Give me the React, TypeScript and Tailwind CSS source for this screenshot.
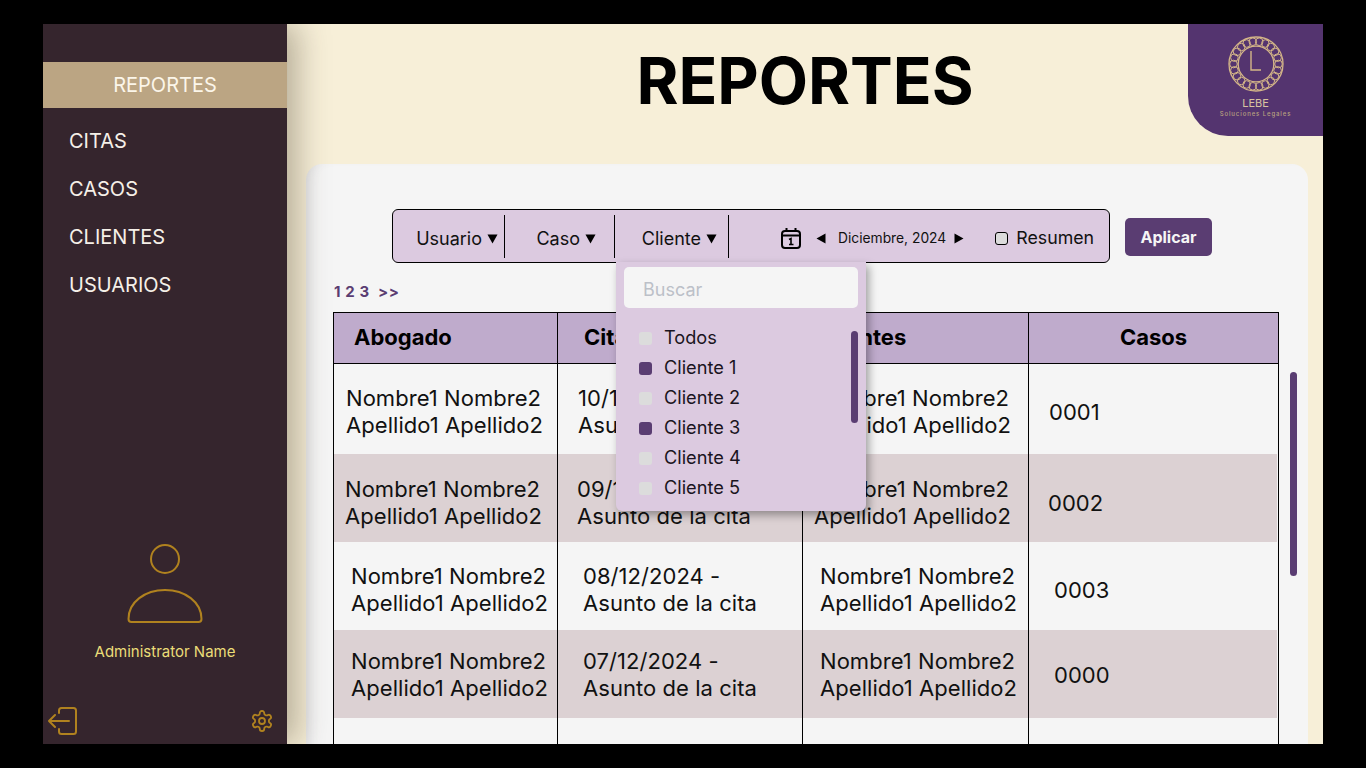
const rows = [
  { date: '10/12/2024 -', caso: '0001', tint: 'mr-[1px]', bg: '', h: 'h-[90px]', pt: 'pt-[6px]', name: 'pl-3', cita: 'pl-5', cli: 'pl-[11px]', num: 'pl-5' },
  { date: '09/12/2024 -', caso: '0002', tint: 'mr-[1px]', bg: 'bg-[#dcd1d3]', h: 'h-[88px]', pt: 'pt-[10px]', name: 'pl-[11px]', cita: 'pl-[19px]', cli: 'pl-[11px]', num: 'pl-[19px]' },
  { date: '08/12/2024 -', caso: '0003', tint: 'mr-[1px]', bg: '', h: 'h-[88px]', pt: 'pt-[8px]', name: 'pl-[17px]', cita: 'pl-[25px]', cli: 'pl-[17px]', num: 'pl-[25px]' },
  { date: '07/12/2024 -', caso: '0000', tint: 'mr-[1px]', bg: 'bg-[#dcd1d3]', h: 'h-[88px]', pt: 'pt-[2px]', name: 'pl-[17px]', cita: 'pl-[25px]', cli: 'pl-[17px]', num: 'pl-[25px]' },
];

const clientes = [
  { label: 'Todos', on: false },
  { label: 'Cliente 1', on: true },
  { label: 'Cliente 2', on: false },
  { label: 'Cliente 3', on: true },
  { label: 'Cliente 4', on: false },
  { label: 'Cliente 5', on: false },
];

function Arrow({ dir }: { dir: 'down' | 'left' | 'right' }) {
  if (dir === 'down') {
    return (
      <svg width="11" height="10" viewBox="0 0 11 10" className="mt-[2px] fill-black">
        <path d="M0.5 0.5h10L5.5 9.5z" />
      </svg>
    );
  }
  return (
    <svg width="10" height="11" viewBox="0 0 10 11" className="fill-black">
      {dir === 'left' ? <path d="M9.500 0.500v10L0.500 5.500z" /> : <path d="M0.500 0.500v10L9.500 5.500z" />}
    </svg>
  );
}

function Sidebar() {
  return (
    <aside className="relative z-10 flex w-[244px] shrink-0 flex-col bg-[#35252d] text-[#f5f0e8] shadow-[10px_0_30px_rgba(60,50,30,0.35)]">
      <div className="mt-[38px] flex h-[46px] items-center justify-center bg-[#bba583] text-[20px] text-[#fbf6ea]">REPORTES</div>
      <nav className="mt-[9px] flex flex-col pl-[26px] text-[20px]">
        <a className="flex h-[48px] items-center">CITAS</a>
        <a className="flex h-[48px] items-center">CASOS</a>
        <a className="flex h-[48px] items-center">CLIENTES</a>
        <a className="flex h-[48px] items-center">USUARIOS</a>
      </nav>
      <div className="mt-auto flex flex-col items-center">
        <svg width="76" height="79" viewBox="0 0 76 79" fill="none" stroke="#b0821f" strokeWidth="2">
          <circle cx="38" cy="15" r="14" />
          <path d="M4.500 78c-2 0-3-1-3-3C1.500 58 18 46 38 46s36.500 12 36.500 29c0 2-1 3-3 3z" />
        </svg>
        <div className="mt-[18px] text-[15px] leading-[22px] text-[#ebdd78]">Administrator Name</div>
      </div>
      <div className="mt-[44px] mb-[9px] flex items-center justify-between pr-[13px] pl-[5px]">
        <svg width="30" height="28" viewBox="0 0 30 28" fill="none" stroke="#b0821f" strokeWidth="2" strokeLinecap="round" strokeLinejoin="round">
          <path d="M11 6V3.500C11 2 12 1 13.500 1h12C27 1 28 2 28 3.500v21c0 1.500-1 2.500-2.500 2.500h-12C12 27 11 26 11 24.500V22" />
          <path d="M1 14h20M7 8l-6 6 6 6" />
        </svg>
        <svg width="24" height="24" viewBox="0 0 24 24" fill="none" stroke="#b0821f" strokeWidth="1.800" strokeLinecap="round" strokeLinejoin="round">
          <path d="M12.220 2h-.440a2 2 0 0 0-2 2v.180a2 2 0 0 1-1 1.730l-.430.250a2 2 0 0 1-2 0l-.150-.080a2 2 0 0 0-2.730.730l-.220.380a2 2 0 0 0 .730 2.730l.150.100a2 2 0 0 1 1 1.720v.510a2 2 0 0 1-1 1.740l-.150.090a2 2 0 0 0-.730 2.730l.220.380a2 2 0 0 0 2.730.730l.150-.080a2 2 0 0 1 2 0l.430.250a2 2 0 0 1 1 1.730V20a2 2 0 0 0 2 2h.440a2 2 0 0 0 2-2v-.180a2 2 0 0 1 1-1.730l.430-.250a2 2 0 0 1 2 0l.150.080a2 2 0 0 0 2.730-.730l.220-.390a2 2 0 0 0-.730-2.730l-.150-.080a2 2 0 0 1-1-1.740v-.500a2 2 0 0 1 1-1.740l.150-.090a2 2 0 0 0 .730-2.730l-.220-.380a2 2 0 0 0-2.730-.730l-.150.080a2 2 0 0 1-2 0l-.430-.250a2 2 0 0 1-1-1.730V4a2 2 0 0 0-2-2z" />
          <circle cx="12" cy="12" r="3" />
        </svg>
      </div>
    </aside>
  );
}

function Logo() {
  const links = [...Array(22)].map((_, i) => {
    const a = (i / 22) * Math.PI * 2;
    return { x: 28 + Math.cos(a) * 22.5, y: 28 + Math.sin(a) * 22.5 };
  });
  return (
    <div className="absolute top-0 right-0 z-20 flex h-[112px] w-[135px] flex-col items-center rounded-bl-[40px] bg-[#54346f] pt-[12px]">
      <svg width="56" height="56" viewBox="0 0 56 56" fill="none" stroke="#d4b688">
        <circle cx="28" cy="28" r="27" strokeWidth="1.300" />
        <circle cx="28" cy="28" r="17.800" strokeWidth="1.300" />
        {links.map((l, i) => (
          <circle key={i} cx={l.x} cy={l.y} r="3.800" strokeWidth="1" />
        ))}
        <path d="M23 15v19h10" strokeWidth="1.400" />
      </svg>
      <div className="mt-[5px] text-[11px] leading-[12px] text-[#d8c3a0]">LEBE</div>
      <div className="mt-[1px] text-[6px] leading-[8px] font-medium tracking-[0.9px] text-[#b9a27f]">Soluciones Legales</div>
    </div>
  );
}

function Toolbar() {
  return (
    <div className="flex items-center">
      <div className="relative flex h-[54px] w-[718px] items-center rounded-[6px] border border-black bg-[#dccae0] text-[18px]">
        <div className="flex h-[43px] w-[112px] items-center justify-end gap-[5px] border-r border-black pt-[4px] pr-[6px]">
          Usuario <Arrow dir="down" />
        </div>
        <div className="flex h-[43px] w-[110px] items-center justify-end gap-[5px] border-r border-black pt-[4px] pr-[18px]">
          Caso <Arrow dir="down" />
        </div>
        <div className="flex h-[43px] w-[114px] items-center justify-end gap-[5px] border-r border-black pt-[4px] pr-[11px]">
          Cliente <Arrow dir="down" />
        </div>
        <div className="flex h-[43px] items-center pt-[4px]">
          <svg width="20" height="21" viewBox="0 0 20 21" fill="none" stroke="black" strokeWidth="2" className="ml-[52px]">
            <rect x="1" y="3" width="18" height="17" rx="3" />
            <path d="M5.500 0v4M14.500 0v4M1 7.500h18" />
            <path d="M8 11.500l2-1v6M8 16.500h4.500" strokeWidth="1.600" />
          </svg>
          <span className="ml-[15px]"><Arrow dir="left" /></span>
          <span className="ml-[12px] text-[13.800px]">Diciembre, 2024</span>
          <span className="ml-[8px]"><Arrow dir="right" /></span>
          <span className="ml-[31px] h-[13px] w-[13px] rounded-[3px] border border-black bg-[#dcdcdc]" />
          <span className="ml-[8px] text-[17.800px]">Resumen</span>
        </div>

        <div className="absolute top-[52px] left-[223px] z-20 h-[249px] w-[250px] rounded-b-[6px] bg-[#dccae0] shadow-[3px_4px_8px_rgba(0,0,0,0.35)]">
          <div className="mx-[8px] mt-[5px] flex h-[41px] items-center rounded-[5px] bg-[#f5f5f5] pt-[3px] pl-[19px] text-[#bcc0c8]">Buscar</div>
          <div className="relative mt-[15px] flex flex-col pl-[23px] text-[#1a1420]">
            {clientes.map((c) => (
              <div key={c.label} className="flex h-[30px] items-center gap-[12px] text-[18.200px]">
                <span className={`h-[13px] w-[13px] rounded-[3px] ${c.on ? 'bg-[#5a3d72]' : 'bg-[#dcdcdc]'}`} />
                {c.label}
              </div>
            ))}
            <span className="absolute top-[8px] right-[8px] h-[92px] w-[7px] rounded-full bg-[#5a3d72]" />
          </div>
        </div>
      </div>
      <button className="mt-[2px] ml-[15px] h-[38px] w-[87px] rounded-[5px] bg-[#5a3d72] text-[16px] font-bold text-[#f5f5f5]">Aplicar</button>
    </div>
  );
}

function Table() {
  return (
    <div className="w-[946px] border-x border-black">
      <div className="flex h-[52px] items-center border-y border-black bg-[#bfabcc] text-[22px] font-bold text-black">
        <div className="flex h-full w-[224px] items-center border-r border-black pb-[2px] pl-[20px]">Abogado</div>
        <div className="flex h-full w-[245px] items-center border-r border-black pb-[2px] pl-[26px]">Citas</div>
        <div className="flex h-full w-[226px] items-center border-r border-black pb-[2px] pl-[15px]">Clientes</div>
        <div className="flex h-full flex-1 items-center justify-center pb-[2px]">Casos</div>
      </div>
      {rows.map((r) => (
        <div key={r.caso} className={`flex ${r.h} ${r.tint} ${r.bg} items-center text-[22px] leading-[27px] tracking-[0.05px]`}>
          <div className={`flex h-full w-[224px] items-center border-r border-black ${r.pt} ${r.name}`}>
            <div>Nombre1 Nombre2<br />Apellido1 Apellido2</div>
          </div>
          <div className={`flex h-full w-[245px] items-center border-r border-black ${r.pt} ${r.cita}`}>
            <div>{r.date}<br />Asunto de la cita</div>
          </div>
          <div className={`flex h-full w-[226px] items-center border-r border-black ${r.pt} ${r.cli}`}>
            <div>Nombre1 Nombre2<br />Apellido1 Apellido2</div>
          </div>
          <div className={`flex h-full flex-1 items-center ${r.pt} ${r.num}`}>{r.caso}</div>
        </div>
      ))}
      <div className="flex h-[60px]">
        <div className="w-[224px] border-r border-black" />
        <div className="w-[245px] border-r border-black" />
        <div className="w-[226px] border-r border-black" />
      </div>
    </div>
  );
}

export default function App() {
  return (
    <div className="flex h-[768px] w-[1366px] items-center justify-center overflow-hidden bg-black font-['Inter',sans-serif] text-[#111]">
      <div className="relative flex h-[720px] w-[1280px] overflow-hidden">
        <Sidebar />
        <main className="flex min-w-0 flex-1 flex-col bg-[#f7efd8]">
          <Logo />
          <h1 className="mt-[17px] text-center text-[64px] leading-[80px] font-bold text-black">REPORTES</h1>
          <section className="mt-[43px] ml-[19px] w-[1002px] flex-1 rounded-t-[16px] bg-[#f5f5f5] pt-[45px] pl-[27px] shadow-[inset_10px_0_12px_-8px_rgba(80,80,110,0.12)]">
            <div className="ml-[59px]"><Toolbar /></div>
            <div className="mt-[20px] ml-[1px] text-[15px] leading-[18px] font-bold tracking-[0.6px] text-[#5a3d72]">1 2 3 &nbsp;&gt;&gt;</div>
            <div className="relative mt-[11px]">
              <Table />
              <span className="absolute top-[60px] left-[957px] h-[204px] w-[7px] rounded-full bg-[#5a3d72]" />
            </div>
          </section>
        </main>
      </div>
    </div>
  );
}
